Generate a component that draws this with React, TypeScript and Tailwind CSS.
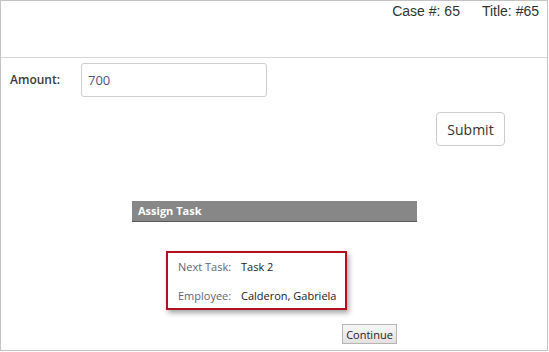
export default function App() {
  return (
    <div className="h-[352px] w-[549px] bg-white font-['Open_Sans',sans-serif] text-[#333]">
      <div className="flex h-[351px] w-[548px] flex-col border border-[#c4c4c4]">
        <div className="flex h-[57px] shrink-0 justify-end gap-[22px] border-b border-[#d6d6d6] pr-[8px] pt-[2px] font-['Liberation_Sans',Arial,sans-serif] text-[14px] leading-[17px] text-[#333]">
          <span>Case #: 65</span>
          <span>Title: #65</span>
        </div>

        <div className="mt-[5px] flex items-center pl-[9px]">
          <label className="w-[71px] text-[12px] font-semibold text-[#3a3a3a]">Amount:</label>
          <input
            type="text"
            defaultValue="700"
            className="h-[34px] w-[186px] rounded-[3px] border border-[#cfcfcf] pl-[6px] text-[13px] text-[#4a5878] outline-none"
          />
        </div>

        <div className="mt-[15px] flex justify-end pr-[42px]">
          <button
            type="button"
            className="h-[34px] w-[69px] rounded-[4px] border border-[#cccccc] bg-white text-[14px] text-[#333]"
          >
            Submit
          </button>
        </div>

        <div className="ml-[131px] mt-[55px] flex h-[21px] w-[285px] items-center border-b border-[#5a5a5a] bg-[#878787] pl-[6px] text-[11px] font-bold text-white">
          Assign Task
        </div>

        <div className="ml-[165px] mt-[29px] flex h-[59px] w-[181px] flex-col justify-center gap-[14px] border-2 border-[#b2121c] pl-[10px] text-[11px] shadow-[2px_3px_5px_rgba(0,0,0,0.35)]">
          <div className="flex leading-[15px]">
            <span className="w-[63px] text-[#5f6577]">Next Task:</span>
            <span className="text-[#222]">Task 2</span>
          </div>
          <div className="flex leading-[15px]">
            <span className="w-[63px] text-[#5f6577]">Employee:</span>
            <span className="text-[#222]">Calderon, Gabriela</span>
          </div>
        </div>

        <div className="ml-[341px] mt-[14px] flex">
          <button
            type="button"
            className="h-[20px] w-[55px] border border-[#b5b5b5] bg-gradient-to-b from-[#f7f7f7] to-[#e2e2e2] text-[11px] leading-none text-[#222]"
          >
            Continue
          </button>
        </div>
      </div>
    </div>
  );
}
